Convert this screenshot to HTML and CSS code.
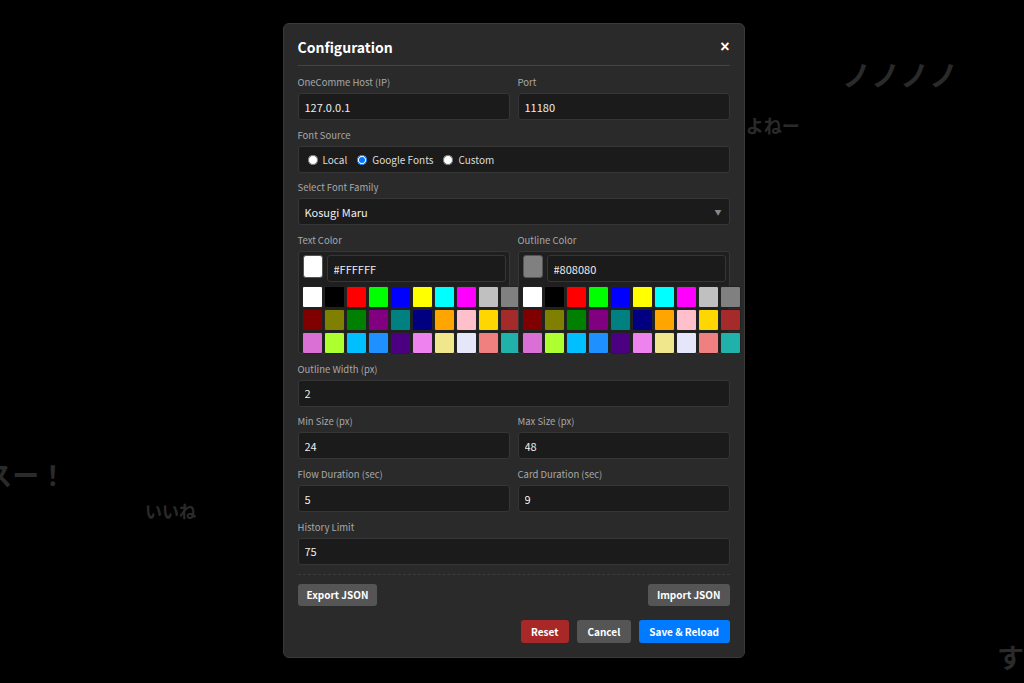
FILE: index.html
```html
<!DOCTYPE html>
<html lang="ja">

<head>
  <meta charset="UTF-8">
  <meta name="viewport" content="width=device-width, initial-scale=1.0">
  <title>Configuration</title>
  <link rel="stylesheet" href="styles.css">
</head>

<body>
  <!-- 背景のコメント -->
  <div class="stage">
    <span class="comment c1">ノノノノ</span>
    <span class="comment c2">かわいいよねー</span>
    <span class="comment c3">ナイスー！</span>
    <span class="comment c4">いいね</span>
    <span class="comment c5">す</span>
  </div>

  <!-- 設定モーダル -->
  <div class="overlay">
    <div class="modal">
      <div class="modal-header">
        <h2>Configuration</h2>
        <button class="close-btn">&times;</button>
      </div>

      <div class="row">
        <div class="field">
          <label for="host">OneComme Host (IP)</label>
          <input type="text" id="host" value="127.0.0.1">
        </div>
        <div class="field">
          <label for="port">Port</label>
          <input type="text" id="port" value="11180">
        </div>
      </div>

      <div class="field">
        <label>Font Source</label>
        <div class="radio-box">
          <label class="radio"><input type="radio" name="src"> Local</label>
          <label class="radio"><input type="radio" name="src" checked> Google Fonts</label>
          <label class="radio"><input type="radio" name="src"> Custom</label>
        </div>
      </div>

      <div class="field">
        <label for="family">Select Font Family</label>
        <div class="select-wrap">
          <select id="family">
            <option>Kosugi Maru</option>
          </select>
        </div>
      </div>

      <div class="row">
        <div class="field">
          <label>Text Color</label>
          <div class="color-box">
            <div class="color-top">
              <span class="color-preview preview-white"></span>
              <input type="text" value="#FFFFFF">
            </div>
            <div class="palette"></div>
          </div>
        </div>
        <div class="field">
          <label>Outline Color</label>
          <div class="color-box">
            <div class="color-top">
              <span class="color-preview preview-gray"></span>
              <input type="text" value="#808080">
            </div>
            <div class="palette"></div>
          </div>
        </div>
      </div>

      <div class="field">
        <label for="outline">Outline Width (px)</label>
        <input type="text" id="outline" value="2">
      </div>

      <div class="row">
        <div class="field">
          <label for="min">Min Size (px)</label>
          <input type="text" id="min" value="24">
        </div>
        <div class="field">
          <label for="max">Max Size (px)</label>
          <input type="text" id="max" value="48">
        </div>
      </div>

      <div class="row">
        <div class="field">
          <label for="flow">Flow Duration (sec)</label>
          <input type="text" id="flow" value="5">
        </div>
        <div class="field">
          <label for="card">Card Duration (sec)</label>
          <input type="text" id="card" value="9">
        </div>
      </div>

      <div class="field">
        <label for="history">History Limit</label>
        <input type="text" id="history" value="75">
      </div>

      <div class="io-row">
        <button class="btn btn-gray">Export JSON</button>
        <button class="btn btn-gray">Import JSON</button>
      </div>

      <div class="actions">
        <button class="btn btn-red">Reset</button>
        <button class="btn btn-gray">Cancel</button>
        <button class="btn btn-blue">Save &amp; Reload</button>
      </div>
    </div>
  </div>

  <script>
    // パレットの色
    var colors = [
      "#ffffff", "#000000", "#ff0000", "#00ff00", "#0000ff", "#ffff00", "#00ffff", "#ff00ff", "#c0c0c0", "#808080",
      "#800000", "#808000", "#008000", "#800080", "#008080", "#000080", "#ffa500", "#ffc0cb", "#ffd700", "#a52a2a",
      "#da70d6", "#adff2f", "#00bfff", "#1e90ff", "#4b0082", "#ee82ee", "#f0e68c", "#e6e6fa", "#f08080", "#20b2aa"
    ];
    var palettes = document.getElementsByClassName("palette");
    for (var p = 0; p < palettes.length; p++) {
      for (var i = 0; i < colors.length; i++) {
        var sw = document.createElement("span");
        sw.className = "swatch";
        sw.style.background = colors[i];
        palettes[p].appendChild(sw);
      }
    }
  </script>
</body>

</html>
```

FILE: styles.css
```css
* {
  box-sizing: border-box;
}

body {
  margin: 0;
  width: 1024px;
  height: 683px;
  overflow: hidden;
  background: #000;
  font-family: "Noto Sans CJK JP", "Liberation Sans", sans-serif;
  color: #e6e6e6;
}

/* 背景コメント */
.stage {
  position: absolute;
  inset: 0;
  overflow: hidden;
}

.comment {
  position: absolute;
  white-space: nowrap;
  font-weight: bold;
  color: #2a2a2a;
  line-height: 1;
}

.c1 { left: 842px; top: 60px; font-size: 29px; }
.c2 { left: 674px; top: 116px; font-size: 18px; }
.c3 { left: -68px; top: 461px; font-size: 27px; }
.c4 { left: 145px; top: 502px; font-size: 17px; }
.c5 { left: 997px; top: 643px; font-size: 27px; }

.overlay {
  position: relative;
  height: 100%;
  display: flex;
  align-items: flex-start;
  justify-content: center;
  padding: 23px 0 0 3px;
}

.modal {
  width: 462px;
  background: #2a2a2a;
  border: 1px solid #3a3a3a;
  border-radius: 6px;
  padding: 14px 14px 14px;
}

.modal-header {
  display: flex;
  justify-content: space-between;
  align-items: center;
  padding-bottom: 9px;
  border-bottom: 1px solid #444;
  margin-bottom: 10px;
}

.modal-header h2 {
  margin: 0;
  font-size: 14px;
  line-height: 18px;
  font-weight: bold;
  color: #fff;
}

.close-btn {
  background: none;
  border: none;
  color: #fff;
  font-size: 16px;
  font-weight: bold;
  padding: 0;
  line-height: 18px;
  cursor: pointer;
  font-family: "Liberation Sans", sans-serif;
}

.row {
  display: grid;
  grid-template-columns: minmax(0, 1fr) minmax(0, 1fr);
  gap: 8px;
}

.field {
  margin-bottom: 8.7px;
  min-width: 0;
}

.field > label {
  display: block;
  font-size: 9.5px;
  line-height: 13px;
  color: #a8a8a8;
  margin-bottom: 4px;
}

input[type="text"],
select {
  display: block;
  width: 100%;
  height: 27px;
  padding: 0 6px;
  background: #1b1b1b;
  border: 1px solid #363636;
  border-radius: 3px;
  color: #eee;
  font-family: inherit;
  font-size: 11px;
  outline: none;
}

.radio-box {
  height: 27px;
  display: flex;
  align-items: center;
  gap: 10px;
  padding: 0 9px;
  background: #1b1b1b;
  border: 1px solid #363636;
  border-radius: 3px;
}

.radio {
  display: flex;
  align-items: center;
  gap: 5px;
  font-size: 10px;
  color: #ddd;
}

.radio input {
  width: 10px;
  height: 10px;
  margin: 1px 0 0;
  color-scheme: light;
}

.select-wrap {
  position: relative;
}

.select-wrap select {
  appearance: none;
}

.select-wrap::after {
  content: "▼";
  position: absolute;
  right: 8px;
  top: 9px;
  font-size: 7px;
  color: #888;
}

/* 色の選択 */
.color-box {
  position: relative;
  height: 103px;
  background: #1f1f1f;
  border: 1px solid #363636;
  border-radius: 3px;
  padding: 3px 3px 0;
}

.color-top {
  display: flex;
  align-items: flex-start;
  gap: 4px;
}

.color-preview {
  flex: none;
  width: 20px;
  height: 23px;
  margin-left: 1px;
  border-radius: 3px;
  border: 1px solid #555;
}

.preview-white {
  background: #fff;
}

.preview-gray {
  background: #808080;
}

.palette {
  display: grid;
  grid-template-columns: repeat(10, 21px);
  grid-auto-rows: 22px;
  gap: 1px;
  margin-top: 4px;
  width: 219px;
}

.swatch {
  border: 1px solid #222;
  border-radius: 2px;
}

.io-row {
  display: flex;
  justify-content: space-between;
  margin-top: 3px;
  padding-top: 9px;
  border-top: 1px dashed #3c3c3c;
}

.actions {
  display: flex;
  justify-content: flex-end;
  gap: 8px;
  margin-top: 14px;
}

.btn {
  height: 22px;
  padding: 0 9px;
  border: none;
  border-radius: 3px;
  color: #fff;
  font-family: inherit;
  font-size: 10px;
  font-weight: bold;
  cursor: pointer;
}

.actions .btn {
  height: 23px;
  padding: 0 10.5px;
}

.btn-gray {
  background: #555;
}

.btn-red {
  background: #a82828;
}

.btn-blue {
  background: #007bff;
}
```
